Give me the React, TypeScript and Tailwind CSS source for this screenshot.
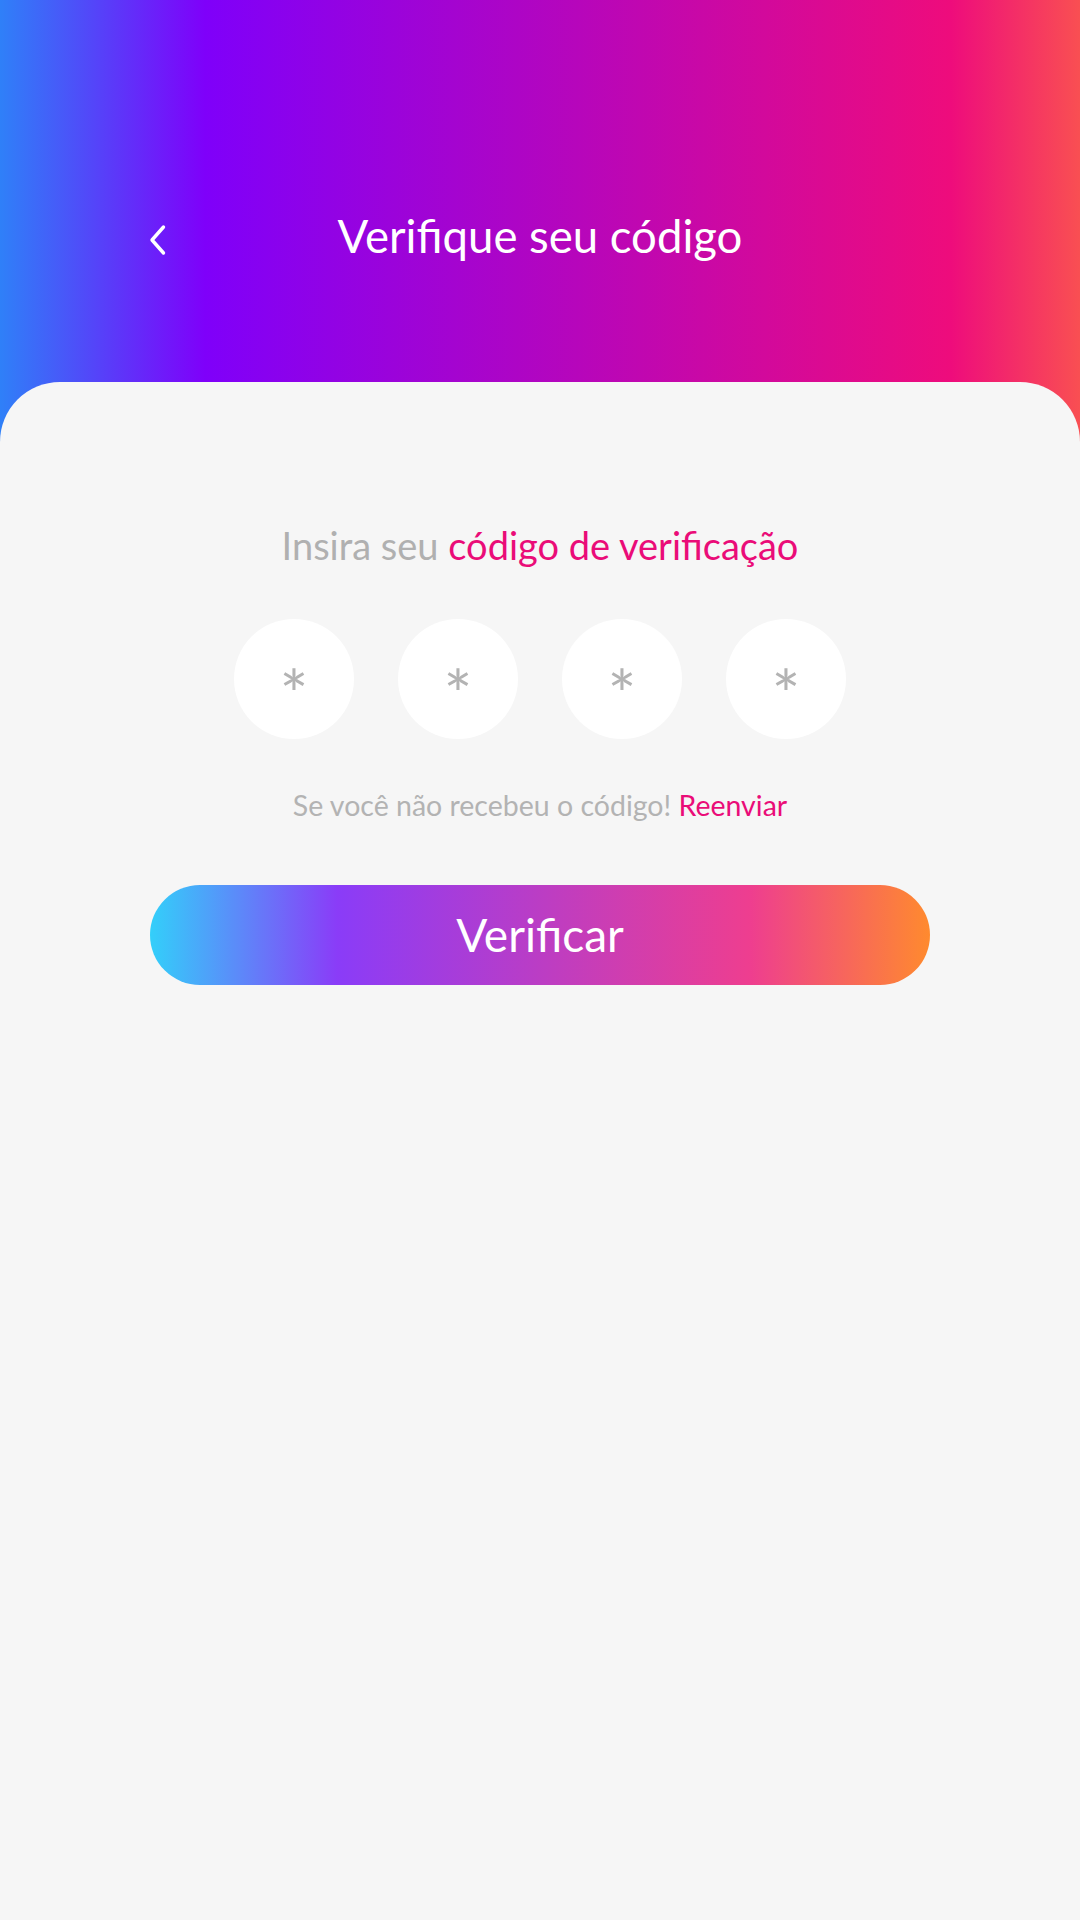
const digits = ['*', '*', '*', '*'];

function BackIcon() {
    return (
        <svg width="20" height="32" viewBox="0 0 20 32" fill="none">
            <polyline
                points="15.5,3 4,16 15.5,29"
                stroke="white"
                strokeWidth="3.4"
                strokeLinecap="round"
                strokeLinejoin="round"
            />
        </svg>
    );
}

export default function App() {
    return (
        <div
            className="min-h-[1920px] w-full flex flex-col bg-[linear-gradient(90deg,#2f80f8_0%,#7f00fa_19%,#ee0c7c_88%,#f94f52_100%)]"
            style={{ fontFamily: 'Lato, "Noto Sans", sans-serif' }}
        >
            {/* Header */}
            <header className="h-[382px] relative flex items-center justify-center pt-[90px]">
                <button className="absolute left-[148px] top-[224px]">
                    <BackIcon />
                </button>
                <h1 className="text-white text-[45.5px] leading-none">Verifique seu código</h1>
            </header>

            {/* Card */}
            <main className="flex-1 bg-[#f6f6f6] rounded-t-[60px] flex flex-col items-center pt-[144px]">
                <p className="text-[38px] leading-none text-[#b0b0b0]">
                    Insira seu <span className="text-[#ea0c78]">código de verificação</span>
                </p>

                <div className="flex gap-[44px] mt-[55px]">
                    {digits.map((d, i) => (
                        <div
                            key={i}
                            className="w-[120px] h-[120px] rounded-full bg-white flex items-center justify-center text-[#b3b3b3] text-[68px] leading-none pt-[28px]"
                        >
                            {d}
                        </div>
                    ))}
                </div>

                <p className="mt-[52px] text-[28.5px] leading-none text-[#b3b3b3]">
                    Se você não recebeu o código! <span className="text-[#ea0c78]">Reenviar</span>
                </p>

                <button className="mt-[65px] w-[780px] h-[100px] rounded-full text-white text-[46px] leading-none bg-[linear-gradient(90deg,#33cffa_0%,#8a3cf8_24%,#ee3e8f_77%,#ff8a2e_100%)]">
                    Verificar
                </button>
            </main>
        </div>
    );
}
